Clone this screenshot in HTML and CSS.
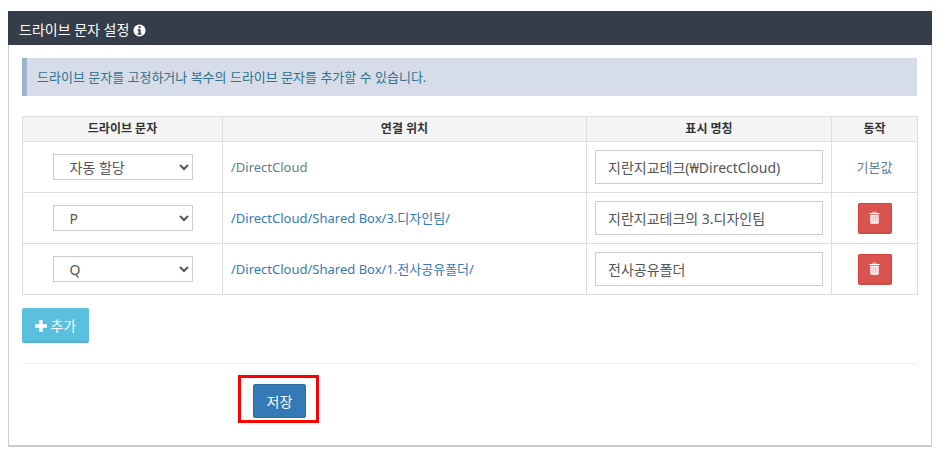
FILE: index.html
```html
<!DOCTYPE html>
<html lang="ko">
<head>
    <meta charset="UTF-8">
    <meta name="viewport" content="width=device-width, initial-scale=1.0">
    <title>드라이브 문자 설정</title>
    <link rel="stylesheet" href="styles.css">
</head>
<body>
    <div class="panel">
        <div class="panel-heading">
            드라이브 문자 설정
            <svg class="info-icon" viewBox="0 0 14 14" width="13" height="13">
                <circle cx="7" cy="7" r="6.5" fill="#fff"/>
                <rect x="5.9" y="2.4" width="2.3" height="2.1" fill="#353d4a"/>
                <path d="M4.9 5.6h3.3v4.6h1v1.4H4.9v-1.4h1V7H4.9z" fill="#353d4a"/>
            </svg>
        </div>
        <div class="panel-body">
            <div class="alert">드라이브 문자를 고정하거나 복수의 드라이브 문자를 추가할 수 있습니다.</div>

            <table class="drive-table">
                <colgroup>
                    <col class="col-drive">
                    <col class="col-path">
                    <col class="col-name">
                    <col class="col-action">
                </colgroup>
                <thead>
                    <tr>
                        <th>드라이브 문자</th>
                        <th>연결 위치</th>
                        <th>표시 명칭</th>
                        <th>동작</th>
                    </tr>
                </thead>
                <tbody>
                    <tr>
                        <td class="center">
                            <select class="drive-select">
                                <option>자동 할당</option>
                            </select>
                        </td>
                        <td class="muted">/DirectCloud</td>
                        <td class="name-cell"><input class="name-input" type="text" value="지란지교테크(₩DirectCloud)"></td>
                        <td class="center"><span class="muted">기본값</span></td>
                    </tr>
                    <tr>
                        <td class="center">
                            <select class="drive-select">
                                <option>P</option>
                            </select>
                        </td>
                        <td class="path">/DirectCloud/Shared Box/3.디자인팀/</td>
                        <td class="name-cell"><input class="name-input" type="text" value="지란지교테크의 3.디자인팀"></td>
                        <td class="center">
                            <button class="btn btn-delete">
                                <svg viewBox="0 0 12 14" width="11" height="13">
                                    <path d="M4 2V.6h4V2h3.6v1.1H.4V2zM5 2h2V1.4H5z" fill="#fff"/>
                                    <path d="M1.4 4h9.2v8.8c0 .6-.4 1-1 1H2.400c-.6 0-1-.4-1-1z" fill="#fff"/>
                                    <path d="M3.300 5.200v7.200M5.100 5.200v7.200M6.900 5.200v7.200M8.700 5.200v7.200" stroke="#f0a0a8" stroke-width=".9"/>
                                </svg>
                            </button>
                        </td>
                    </tr>
                    <tr>
                        <td class="center">
                            <select class="drive-select">
                                <option>Q</option>
                            </select>
                        </td>
                        <td class="path">/DirectCloud/Shared Box/1.전사공유폴더/</td>
                        <td class="name-cell"><input class="name-input" type="text" value="전사공유폴더"></td>
                        <td class="center">
                            <button class="btn btn-delete">
                                <svg viewBox="0 0 12 14" width="11" height="13">
                                    <path d="M4 2V.6h4V2h3.6v1.1H.4V2zM5 2h2V1.4H5z" fill="#fff"/>
                                    <path d="M1.4 4h9.2v8.8c0 .6-.4 1-1 1H2.400c-.6 0-1-.4-1-1z" fill="#fff"/>
                                    <path d="M3.300 5.200v7.200M5.100 5.200v7.200M6.900 5.200v7.200M8.700 5.200v7.200" stroke="#f0a0a8" stroke-width=".9"/>
                                </svg>
                            </button>
                        </td>
                    </tr>
                </tbody>
            </table>

            <button class="btn btn-add">
                <svg viewBox="0 0 12 12" width="12" height="12">
                    <path d="M4.300 0h3.400v4.300H12v3.400H7.700V12H4.300V7.700H0V4.300h4.300z" fill="#fff"/>
                </svg>
                추가
            </button>

            <div class="form-footer">
                <div class="highlight">
                    <button class="btn btn-save">저장</button>
                </div>
            </div>
        </div>
    </div>
</body>
</html>
```

FILE: styles.css
```css
body {
    margin: 0;
    padding: 11px 14px 0 8px;
    font-family: "Noto Sans", "Noto Sans CJK KR", sans-serif;
    font-size: 13px;
    line-height: 20px;
    color: #333;
    background-color: #fff;
}
.panel {
    border-left: 1px solid #ccc;
    border-right: 1px solid #ccc;
    border-bottom: 2px solid #ccc;
    height: 436px;
    box-sizing: border-box;
}
.panel-heading {
    margin: 0 -1px;
    height: 34px;
    padding-left: 11px;
    font-size: 14px;
    line-height: 37px;
    color: #fff;
    background-color: #353d4a;
}
.info-icon {
    vertical-align: -2px;
}
.panel-body {
    padding: 13px 14px 0 13px;
}
.alert {
    height: 38px;
    box-sizing: border-box;
    padding-left: 10px;
    border-left: 5px solid #9db4cb;
    line-height: 38px;
    color: #31708f;
    background-color: #d6dde8;
}
.drive-table {
    width: 895px;
    margin-top: 20px;
    border-collapse: collapse;
    table-layout: fixed;
}
.col-drive { width: 200px; }
.col-path { width: 364px; }
.col-name { width: 245px; }
.col-action { width: 86px; }
.drive-table th,
.drive-table td {
    border: 1px solid #ddd;
    padding: 0 8px;
}
.drive-table th {
    height: 24px;
    font-size: 12px;
    font-weight: 700;
    text-align: center;
    background-color: #f4f4f4;
}
.drive-table td {
    height: 50px;
}
.center {
    text-align: center;
}
.muted {
    color: #5a7f94;
}
.path {
    color: #337ab7;
}
.drive-select {
    width: 140px;
    height: 26px;
    padding-left: 12px;
    border: 1px solid #ccc;
    font-family: inherit;
    font-size: 14px;
    color: #555;
    background-color: #fff;
    vertical-align: middle;
}
.name-input {
    width: 228px;
    height: 34px;
    box-sizing: border-box;
    padding: 0 12px;
    border: 1px solid #ccc;
    font-family: inherit;
    font-size: 14px;
    color: #555;
    vertical-align: middle;
}
.btn {
    border: 1px solid transparent;
    border-radius: 2px;
    font-family: inherit;
    font-size: 14px;
    color: #fff;
    padding: 0;
}
.btn-delete {
    width: 34px;
    height: 31px;
    background-color: #d9534f;
    border-color: #d43f3a;
    border-bottom: 2px solid #c9504c;
    vertical-align: middle;
}
.btn-delete svg {
    display: block;
    margin: 0 auto;
}
.btn-add {
    display: block;
    width: 67px;
    height: 35px;
    margin-top: 13px;
    background-color: #5bc0de;
    border-color: #5bc0de;
    border-bottom: 2px solid #52b3d0;
}
.btn-add svg {
    vertical-align: -1px;
}
.form-footer {
    margin-top: 20px;
    padding-top: 11px;
    border-top: 1px solid #eee;
}
.highlight {
    width: 81px;
    height: 48px;
    box-sizing: border-box;
    margin-left: 216px;
    padding: 6px 0 0 12px;
    border: 3px solid #f00;
}
.btn-save {
    display: block;
    width: 53px;
    height: 34px;
    background-color: #337ab7;
    border-color: #2e6da4;
}
```
